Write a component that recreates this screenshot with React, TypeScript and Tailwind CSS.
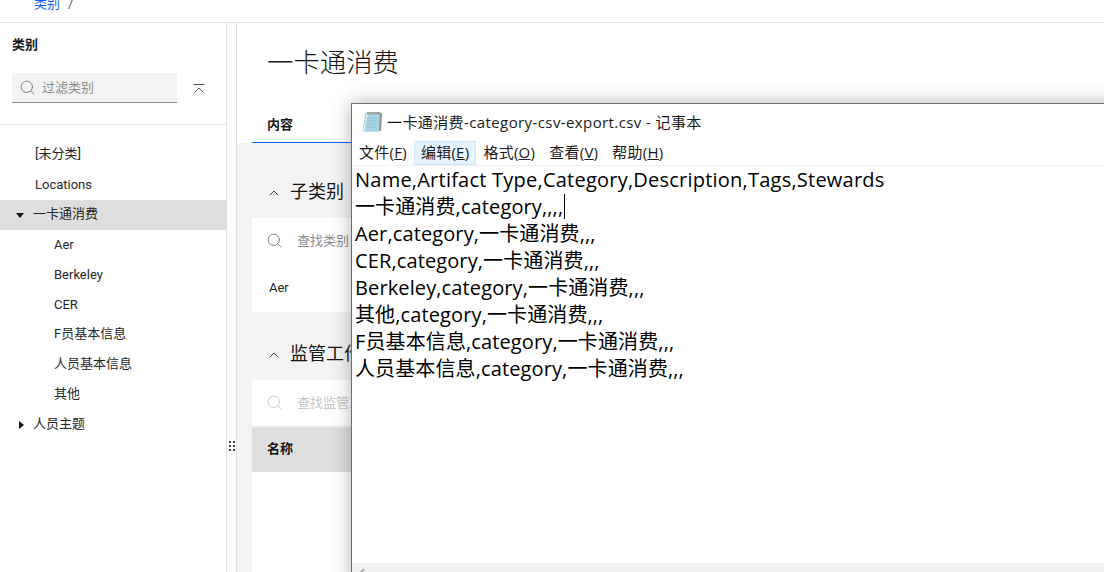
import { ChevronUp, Search } from "lucide-react";

const FONT = "font-['Roboto','Noto_Sans_CJK_SC',sans-serif]";
const NOTE_FONT = "font-['Open_Sans','Noto_Sans_CJK_SC',sans-serif]";

const childCats = ["Aer", "Berkeley", "CER", "F员基本信息", "人员基本信息", "其他"];
const menus = [
  { label: "文件", key: "F" },
  { label: "编辑", key: "E", active: true },
  { label: "格式", key: "O" },
  { label: "查看", key: "V" },
  { label: "帮助", key: "H" },
];
const csvLines = [
  "Name,Artifact Type,Category,Description,Tags,Stewards",
  "一卡通消费,category,,,,",
  "Aer,category,一卡通消费,,,",
  "CER,category,一卡通消费,,,",
  "Berkeley,category,一卡通消费,,,",
  "其他,category,一卡通消费,,,",
  "F员基本信息,category,一卡通消费,,,",
  "人员基本信息,category,一卡通消费,,,",
];

function TreeRow({ label, caret, active, inset }: { label: string; caret?: "down" | "right"; active?: boolean; inset?: boolean }) {
  // CJK labels sit a pixel lower than latin ones in this font stack
  const isCjk = /[^\x00-\x7f]/.test(label);
  return (
    <div className={`flex h-[30px] items-center text-[13px] text-[#262626] ${active ? "bg-[#dedede]" : ""}`}>
      <span className={`flex shrink-0 justify-end pr-[9px] ${inset ? "w-[35px]" : "w-[33px]"}`}>
        {caret === "down" && <span className="h-0 w-0 border-x-[4px] border-t-[5px] border-x-transparent border-t-[#161616]" />}
        {caret === "right" && <span className="h-0 w-0 border-y-[4px] border-l-[5px] border-y-transparent border-l-[#161616]" />}
      </span>
      <span className={isCjk ? "pb-[2px]" : ""}>{label}</span>
    </div>
  );
}

function SearchRow({ text, dim }: { text: string; dim?: boolean }) {
  return (
    <div className={`flex h-[45px] items-center pl-[14px] text-[13px] ${dim ? "text-[#c6c6c6]" : "text-[#8d8d8d]"}`}>
      <Search size={17} strokeWidth={1.25} className={dim ? "text-[#c6c6c6]" : "text-[#6f6f6f]"} />
      <span className="ml-[14px]">{text}</span>
    </div>
  );
}

function SectionTitle({ text }: { text: string }) {
  return (
    <div className="flex items-center text-[18px] leading-none text-[#161616]">
      <ChevronUp size={16} strokeWidth={1.25} className="ml-[14px] mr-[8px] mt-[2px]" />
      <span>{text}</span>
    </div>
  );
}

function NotepadIcon() {
  return (
    <svg width="21" height="22" viewBox="0 0 21 22" className="shrink-0">
      <path d="M4 2h14l-1 18H1z" fill="#a9d6e4" stroke="#9cc3cf" />
      <path d="M1 20 4 2h2L3 20z" fill="#d5edf3" />
      <path d="M18 2h2l-1 18h-2z" fill="#8f8f8f" />
      <path d="M5 1h13v2.500H4.600z" fill="#a3a3a3" />
      <path d="M5 7h11M4.500 10h11M4 13h11M3.500 16h11" stroke="#93c6d8" strokeWidth="1" />
    </svg>
  );
}

export default function App() {
  return (
    <div className={`relative h-[572px] w-[1104px] overflow-hidden bg-white ${FONT}`}>
      {/* breadcrumb, clipped by the top of the shot */}
      <div className="flex h-[23px] items-end border-b border-[#e0e0e0] pb-[10px] pl-[34px] text-[13px] leading-[16px]">
        <span className="text-[#0f62fe]">类别</span>
        <span className="ml-[8px] text-[#525252]">/</span>
      </div>

      <div className="flex h-[549px]">
        {/* category tree */}
        <aside className="w-[227px] shrink-0 border-r border-[#e0e0e0]">
          <div className="h-[102px] border-b border-[#e0e0e0] pl-[12px]">
            <div className="pt-[14px] text-[13px] font-bold leading-[16px] text-[#161616]">类别</div>
            <div className="mt-[20px] flex items-center">
              <div className="flex h-[30px] w-[165px] items-center border-b border-[#8d8d8d] bg-[#f3f3f3] pl-[7px] text-[13px] text-[#8d8d8d]">
                <Search size={17} strokeWidth={1.25} className="text-[#6f6f6f]" />
                <span className="ml-[6px]">过滤类别</span>
              </div>
              <svg width="14" height="12" viewBox="0 0 14 12" className="ml-[15px] mt-[2px]" fill="none" stroke="#525252">
                <path d="M1.500 1.500h11M2.500 9.500 7 5l4.500 4.500" />
              </svg>
            </div>
          </div>
          <div className="pt-[15px]">
            <TreeRow label="[未分类]" inset />
            <TreeRow label="Locations" inset />
            <TreeRow label="一卡通消费" caret="down" active />
            {childCats.map((c) => (
              <div key={c} className="pl-[21px]">
                <TreeRow label={c} />
              </div>
            ))}
            <TreeRow label="人员主题" caret="right" />
          </div>
        </aside>

        {/* drag handle gutter */}
        <div className="flex w-[10px] shrink-0 items-center justify-center border-r border-[#e0e0e0] pt-[296px]">
          <div className="grid grid-cols-2 gap-[2px]">
            {[0, 1, 2, 3, 4, 5].map((i) => (
              <span key={i} className="h-[2px] w-[2px] bg-[#393939]" />
            ))}
          </div>
        </div>

        {/* main */}
        <main className="flex min-w-0 flex-1 flex-col">
          <div className="h-[120px] shrink-0 pl-[15px]">
            <h1 className="pl-[15px] pt-[23px] text-[26.400px] font-light leading-[34px] text-[#161616]">一卡通消费</h1>
            <div className="mt-[28px] flex h-[35px] w-[200px] items-center border-b border-[#0f62fe] pl-[15px] text-[13px] font-bold text-[#161616]">
              内容
            </div>
          </div>
          <div className="flex-1 bg-[#f3f3f3] pl-[15px] pr-[14px]">
            <div className="pt-[40px]">
              <SectionTitle text="子类别" />
            </div>
            <div className="mt-[17px] h-[94px] bg-white">
              <SearchRow text="查找类别" />
              <div className="pl-[17px] pt-[15px] text-[13px] text-[#262626]">Aer</div>
            </div>
            <div className="pt-[33px]">
              <SectionTitle text="监管工作" />
            </div>
            <div className="mt-[17px] bg-white">
              <SearchRow text="查找监管工作" dim />
              <div className="flex h-[47px] items-center border-t-[2px] border-[#f3f3f3] bg-[#dedede] pb-[2px] pl-[15px] text-[13px] font-bold text-[#161616]">
                名称
              </div>
              <div className="h-[120px]" />
            </div>
          </div>
        </main>
      </div>

      {/* notepad window on top of the page */}
      <div className={`absolute left-[351px] top-[103px] flex h-[480px] w-[770px] flex-col border border-[#6e6e6e] bg-white shadow-[0_0_18px_rgba(0,0,0,0.3)] ${NOTE_FONT}`}>
        <div className="flex h-[36px] items-center pl-[10px] text-[15px] tracking-[0.4px] text-[#1a1a1a]">
          <NotepadIcon />
          <span className="ml-[4px]">一卡通消费-category-csv-export.csv - 记事本</span>
        </div>
        <div className="flex h-[25px] items-center text-[15px] tracking-[0.25px] text-[#1a1a1a]">
          {menus.map((m) => (
            <span
              key={m.key}
              className={`flex h-[24px] items-center border px-[6px] ${m.active ? "border-[#cce8ff] bg-[#e5f3ff]" : "border-transparent"}`}
            >
              {m.label}(<span className="underline">{m.key}</span>)
            </span>
          ))}
        </div>
        <div className="border-t border-[#f0f0f0] pl-[3px] text-[20px] leading-[27px] tracking-[0.12px] text-black">
          {csvLines.map((line, i) => (
            <div key={line} className={`flex h-[27px] items-center whitespace-pre ${i === 0 ? "tracking-[0.23px]" : ""}`}>
              {line}
              {i === 1 && <span className="ml-[1px] h-[25px] w-[1px] bg-black" />}
            </div>
          ))}
        </div>
        <div className="absolute left-0 right-0 top-[459px] h-[21px] bg-[#f0f0f0]">
          <svg width="10" height="10" viewBox="0 0 10 10" className="ml-[5px] mt-[4px]" fill="none" stroke="#a0a0a0" strokeWidth="1.500">
            <path d="M1 8 7 2" />
          </svg>
        </div>
      </div>
    </div>
  );
}
